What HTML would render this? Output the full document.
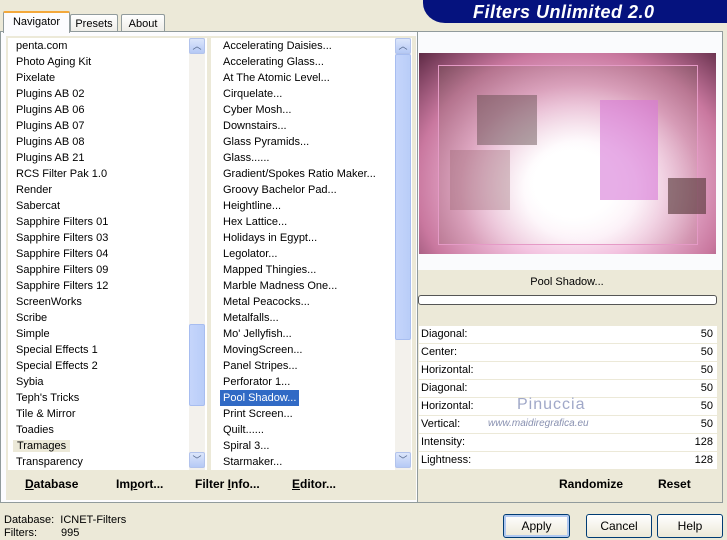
<!DOCTYPE html>
<html><head><style>
*{margin:0;padding:0;box-sizing:border-box}
body{width:727px;height:538px;background:#ece9d8;font-family:"Liberation Sans",sans-serif;font-size:11px;color:#000;position:relative;overflow:hidden}
.abs{position:absolute}
.tab{position:absolute;top:13px;height:19px;border:1px solid #919b9c;border-bottom:none;background:linear-gradient(#fff,#ecebe5);text-align:center;line-height:18px;font-size:11px;border-radius:2px 2px 0 0}
.list{position:absolute;background:#fff;overflow:hidden}
.list div{height:16px;line-height:16px;padding-left:8px;white-space:nowrap}
.sb{position:absolute;width:16px;background:#f3f1ec}
.arr{position:absolute;left:0;width:16px;height:16px;background:linear-gradient(#dce6fb,#b5c9f5);border:1px solid #b2c3ec;border-radius:2px;color:#4d6185;font-size:9px;text-align:center;line-height:14px}
.thumb{position:absolute;left:0;width:16px;background:linear-gradient(90deg,#c5d5fb,#b9cdf8);border:1px solid #a7bdf0;border-radius:2px}
.bb{position:absolute;font-weight:bold;font-size:12px}
.row{position:absolute;left:419px;width:298px;height:17px;background:#fff;line-height:17px;padding-left:2px}
.row span{position:absolute;right:4px}
.btn{position:absolute;top:514px;height:24px;border:1px solid #003c74;border-radius:3px;background:linear-gradient(#fff,#ece9d8);text-align:center;line-height:22px;font-size:12px}
</style></head><body>
<div class="abs" style="left:423px;top:0;width:304px;height:23px;background:#05127e;border-radius:0 0 0 22px/0 0 0 20px"></div>
<div class="abs" style="left:473px;top:2px;color:#fff;font:italic bold 18px 'Liberation Sans',sans-serif;letter-spacing:0.5px">Filters Unlimited 2.0</div>
<div class="tab" style="left:70px;width:48px;top:14px">Presets</div>
<div class="tab" style="left:121px;width:44px;top:14px">About</div>
<div class="abs" style="left:0;top:31px;width:421px;height:472px;border:1px solid #919b9c;background:#fcfcfe"></div>
<div class="tab" style="left:3px;width:67px;top:11px;height:22px;background:#fcfcfe;border-top:2px solid #f3a83b">Navigator</div>
<div class="abs" style="left:6px;top:36px;width:410px;height:464px;background:#ece9d8"></div>
<div class="list" style="left:8px;top:38px;width:199px;height:432px">
<div>penta.com</div><div>Photo Aging Kit</div><div>Pixelate</div><div>Plugins AB 02</div><div>Plugins AB 06</div><div>Plugins AB 07</div><div>Plugins AB 08</div><div>Plugins AB 21</div><div>RCS Filter Pak 1.0</div><div>Render</div><div>Sabercat</div><div>Sapphire Filters 01</div><div>Sapphire Filters 03</div><div>Sapphire Filters 04</div><div>Sapphire Filters 09</div><div>Sapphire Filters 12</div><div>ScreenWorks</div><div>Scribe</div><div>Simple</div><div>Special Effects 1</div><div>Special Effects 2</div><div>Sybia</div><div>Teph's Tricks</div><div>Tile &amp; Mirror</div><div>Toadies</div><div><span style="background:#ece9d8;padding:0 4px;margin-left:-3px">Tramages</span></div><div>Transparency</div>
</div>
<div class="sb" style="left:189px;top:38px;height:432px"><div class="arr" style="top:0">︿</div><div class="thumb" style="top:286px;height:82px"></div><div class="arr" style="top:414px">﹀</div></div>
<div class="list" style="left:211px;top:38px;width:201px;height:432px;padding-left:4px">
<div>Accelerating Daisies...</div><div>Accelerating Glass...</div><div>At The Atomic Level...</div><div>Cirquelate...</div><div>Cyber Mosh...</div><div>Downstairs...</div><div>Glass Pyramids...</div><div>Glass......</div><div>Gradient/Spokes Ratio Maker...</div><div>Groovy Bachelor Pad...</div><div>Heightline...</div><div>Hex Lattice...</div><div>Holidays in Egypt...</div><div>Legolator...</div><div>Mapped Thingies...</div><div>Marble Madness One...</div><div>Metal Peacocks...</div><div>Metalfalls...</div><div>Mo' Jellyfish...</div><div>MovingScreen...</div><div>Panel Stripes...</div><div>Perforator 1...</div><div><span style="background:#316ac5;color:#fff;padding:2px 3px;margin-left:-3px">Pool Shadow...</span></div><div>Print Screen...</div><div>Quilt......</div><div>Spiral 3...</div><div>Starmaker...</div>
</div>
<div class="sb" style="left:395px;top:38px;height:432px"><div class="arr" style="top:0">︿</div><div class="thumb" style="top:16px;height:286px"></div><div class="arr" style="top:414px">﹀</div></div>
<div class="bb" style="left:25px;top:477px"><u>D</u>atabase</div>
<div class="bb" style="left:116px;top:477px">Im<u>p</u>ort...</div>
<div class="bb" style="left:195px;top:477px">Filter <u>I</u>nfo...</div>
<div class="bb" style="left:292px;top:477px"><u>E</u>ditor...</div>
<div class="abs" style="left:417px;top:31px;width:306px;height:472px;border:1px solid #919b9c;background:#ece9d8"></div>
<div class="abs" style="left:418px;top:32px;width:304px;height:238px;background:#fafbfd"></div>
<div class="abs" style="left:419px;top:53px;width:297px;height:201px;background:radial-gradient(ellipse at 52% 65%,#fff 0%,#fff 18%,#f3c3e0 42%,#c9789f 72%,#5e2a45 100%)"></div>
<div class="abs" style="left:438px;top:65px;width:260px;height:180px;border:1px solid #e59ac6;background:radial-gradient(ellipse at 55% 70%,rgba(255,255,255,.95) 0%,rgba(255,255,255,.6) 28%,rgba(200,150,165,.35) 60%,rgba(110,80,80,.4) 100%)"></div>
<div class="abs" style="left:600px;top:100px;width:58px;height:100px;background:rgba(215,120,215,.6)"></div>
<div class="abs" style="left:668px;top:178px;width:38px;height:36px;background:rgba(80,50,50,.6)"></div>
<div class="abs" style="left:477px;top:95px;width:60px;height:50px;background:rgba(90,70,70,.45)"></div>
<div class="abs" style="left:450px;top:150px;width:60px;height:60px;background:rgba(150,100,110,.35)"></div>
<div class="abs" style="left:407px;top:276px;width:320px;text-align:center;font-size:11px">Pool Shadow...</div>
<div class="abs" style="left:418px;top:295px;width:299px;height:10px;border:1px solid #555;border-radius:3px;background:#fff"></div>
<div class="row" style="top:326px">Diagonal:<span>50</span></div>
<div class="row" style="top:344px">Center:<span>50</span></div>
<div class="row" style="top:362px">Horizontal:<span>50</span></div>
<div class="row" style="top:380px">Diagonal:<span>50</span></div>
<div class="row" style="top:398px">Horizontal:<span>50</span></div>
<div class="row" style="top:416px">Vertical:<span>50</span></div>
<div class="row" style="top:434px">Intensity:<span>128</span></div>
<div class="row" style="top:452px">Lightness:<span>128</span></div>
<div class="abs" style="left:517px;top:396px;color:#a0a8c8;font-size:16px;letter-spacing:1px">Pinuccia</div>
<div class="abs" style="left:488px;top:418px;color:#8890b0;font-size:10px;font-style:italic">www.maidiregrafica.eu</div>
<div class="bb" style="left:559px;top:477px">Randomize</div>
<div class="bb" style="left:658px;top:477px">Reset</div>
<div class="abs" style="left:4px;top:514px;line-height:13px">Database:&nbsp;&nbsp;ICNET-Filters<br>Filters:<span style="position:absolute;left:57px">995</span></div>
<div class="btn" style="left:503px;width:67px;box-shadow:inset 0 0 0 2px #b0c8f0">Apply</div>
<div class="btn" style="left:586px;width:66px">Cancel</div>
<div class="btn" style="left:657px;width:66px">Help</div>
</body></html>
